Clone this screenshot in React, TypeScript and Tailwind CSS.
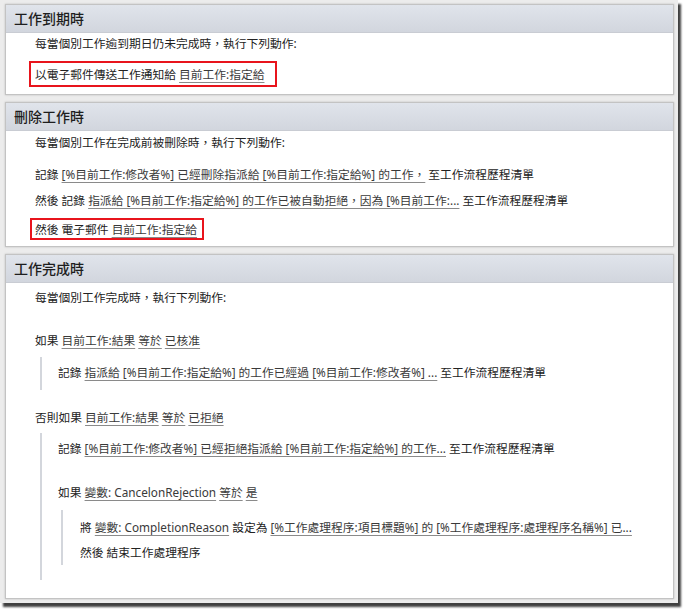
import React from "react";

const font = {
  fontFamily: '"Segoe UI", "Noto Sans", "Noto Sans CJK TC", sans-serif',
};

const L = ({ children }: { children: React.ReactNode }) => (
  <span className="underline decoration-[#8a8a8a] underline-offset-[3px] text-[#3a3a3a]">
    {children}
  </span>
);

const Line = ({
  children,
  className = "",
}: {
  children: React.ReactNode;
  className?: string;
}) => (
  <div
    className={`h-[16px] leading-[16px] whitespace-nowrap text-[11.75px] text-[#222] ${className}`}
  >
    {children}
  </div>
);

const Panel = ({
  title,
  children,
}: {
  title: string;
  children: React.ReactNode;
}) => (
  <div className="bg-white border border-[#c3c3c3] shadow-[0_0_2px_rgba(0,0,0,0.2)]">
    <div className="h-[28px] pl-[8px] flex items-center bg-gradient-to-b from-[#e0e4eb] to-[#d2d6de] border-b border-[#c9ccd3]">
      <span className="text-[14px] text-[#1e1e1e] font-medium">{title}</span>
    </div>
    <div className="pl-[29px]">{children}</div>
  </div>
);

export default function App() {
  return (
    <div className="w-[684px] h-[609px] bg-white" style={font}>
      <div className="w-[678px] h-[603px] bg-[#ececec] shadow-[3px_4px_2px_rgba(0,0,0,0.75)] pt-[4px] pl-[5px] pr-[4px] flex flex-col gap-[7px]">
        <Panel title="工作到期時">
          <Line className="mt-[2px] text-[#4a4a4a]">
            每當個別工作逾到期日仍未完成時，執行下列動作:
          </Line>
          <div className="mt-[10px] mb-[7px] -ml-[6px] w-[248px] h-[26px] border-2 border-[#e8141c] pl-[4px] flex items-center">
            <Line>
              以電子郵件傳送工作通知給 <L>目前工作:指定給</L>
            </Line>
          </div>
        </Panel>

        <Panel title="刪除工作時">
          <Line className="mt-[3px] text-[#4a4a4a]">
            每當個別工作在完成前被刪除時，執行下列動作:
          </Line>
          <Line className="mt-[16px]">
            記錄 <L>[%目前工作:修改者%] 已經刪除指派給 [%目前工作:指定給%] 的工作，</L> 至工作流程歷程清單
          </Line>
          <Line className="mt-[10px]">
            然後 記錄 <L>指派給 [%目前工作:指定給%] 的工作已被自動拒絕，因為 [%目前工作:...</L> 至工作流程歷程清單
          </Line>
          <div className="mt-[10px] mb-[6px] -ml-[5px] w-[174px] h-[22px] border-2 border-[#e8141c] pl-[3px] flex items-center">
            <Line>
              然後 電子郵件 <L>目前工作:指定給</L>
            </Line>
          </div>
        </Panel>

        <Panel title="工作完成時">
          <Line className="mt-[6px] text-[#4a4a4a]">每當個別工作完成時，執行下列動作:</Line>
          <Line className="mt-[27px]">
            如果 <L>目前工作:結果</L> <L>等於</L> <L>已核准</L>
          </Line>
          <div className="mt-[9px] ml-[5px] border-l-2 border-[#d3d6dc] pl-[16px] pt-[7px] pb-[10px]">
            <Line>
              記錄 <L>指派給 [%目前工作:指定給%] 的工作已經過 [%目前工作:修改者%] ...</L> 至工作流程歷程清單
            </Line>
          </div>
          <Line className="mt-[19px]">
            否則如果 <L>目前工作:結果</L> <L>等於</L> <L>已拒絕</L>
          </Line>
          <div className="mt-[8px] mb-[18px] ml-[5px] border-l-2 border-[#d3d6dc] pl-[16px] pt-[7px] pb-[15px]">
            <Line>
              記錄 <L>[%目前工作:修改者%] 已經拒絕指派給 [%目前工作:指定給%] 的工作...</L> 至工作流程歷程清單
            </Line>
            <Line className="mt-[28px]">
              如果 <L>變數: CancelonRejection</L> <L>等於</L> <L>是</L>
            </Line>
            <div className="mt-[10px] ml-[3px] border-l-2 border-[#d3d6dc] pl-[17px] pt-[9px] pb-[5px]">
              <Line>
                將 <L>變數: CompletionReason</L> 設定為 <L>[%工作處理程序:項目標題%] 的 [%工作處理程序:處理程序名稱%] 已...</L>
              </Line>
              <Line className="mt-[9px]">然後 結束工作處理程序</Line>
            </div>
          </div>
        </Panel>
      </div>
    </div>
  );
}
